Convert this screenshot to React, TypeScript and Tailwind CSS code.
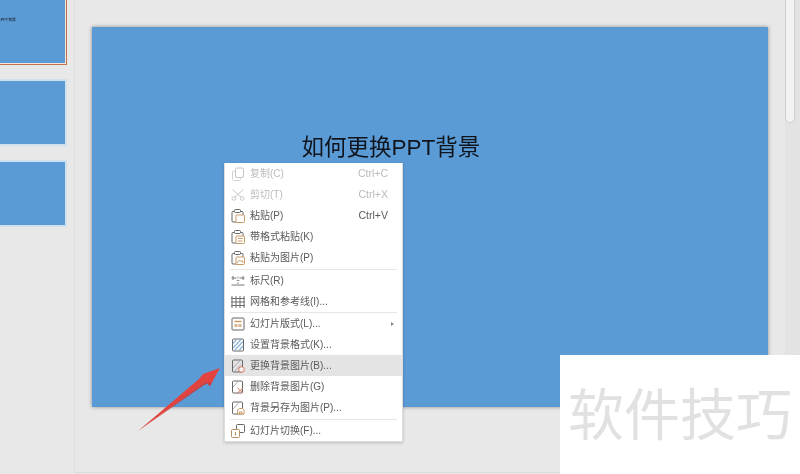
import React from 'react';

const cjk = { fontFamily: '"Liberation Sans", "Noto Sans CJK SC", sans-serif' };

function Svg({ children }: { children: React.ReactNode }) {
  return (
    <svg width="14" height="14" viewBox="0 0 14 14" fill="none" strokeWidth="1" className="shrink-0">
      {children}
    </svg>
  );
}

const CopyIcon = () => (
  <Svg>
    <rect x="4.5" y="1" width="8" height="9.500" rx="1.500" stroke="#c4c4c4" />
    <path d="M4 4H2.500A1 1 0 0 0 1.500 5v7.500a1 1 0 0 0 1 1h6a1 1 0 0 0 1-1v-1" stroke="#d2d2d2" />
  </Svg>
);

const CutIcon = () => (
  <Svg>
    <path d="M12.500 1.500 4 9M1.500 1.500l8.500 7.500" stroke="#c8c8c8" />
    <circle cx="2.800" cy="10.500" r="1.800" stroke="#c8c8c8" />
    <circle cx="11.200" cy="10.500" r="1.800" stroke="#c8c8c8" />
  </Svg>
);

const PasteIcon = ({ extra }: { extra?: React.ReactNode }) => (
  <Svg>
    <path d="M3.500 2.500H2a1 1 0 0 0-1 1v8.500a1 1 0 0 0 1 1h4M9.500 2.500H11a1 1 0 0 1 1 1V6" stroke="#666" />
    <rect x="3.500" y="0.500" width="6" height="3" rx="1" stroke="#666" />
    <rect x="5" y="6" width="8.500" height="7.500" rx="1" stroke="#c99a66" fill="#fff" />
    {extra}
  </Svg>
);

const RulerIcon = () => (
  <Svg>
    <path d="M0.500 4h5M8.500 4h5M2 2v4M12 2v4M0.500 11h13" stroke="#777" />
    <path d="M7 2.500v2M5.500 6.500h3M7 8v2" stroke="#999" />
  </Svg>
);

const GridIcon = () => (
  <Svg>
    <path d="M1 1v12M5 1v12M9 1v12M13 1v12M0 3.500h14M0 7h14M0 10.500h14" stroke="#6e6e6e" />
  </Svg>
);

const LayoutIcon = () => (
  <Svg>
    <rect x="1" y="1" width="12" height="12" rx="1" stroke="#666" />
    <path d="M3.500 4.500h7" stroke="#c99a66" strokeWidth="1.500" />
    <rect x="3.500" y="7" width="3" height="3" fill="#d8b48c" />
    <rect x="7.500" y="7" width="3" height="3" fill="#d8b48c" />
  </Svg>
);

const BgFormatIcon = () => (
  <Svg>
    <rect x="1.500" y="1" width="11" height="12" rx="1" stroke="#666" />
    <path d="M2 10 10 1.500M3.500 12.500l8.500-9M2 5.500 5.500 1.500M8 12.500l4-4.500" stroke="#8fb2d6" strokeWidth="1.200" />
  </Svg>
);

const BgSwapIcon = () => (
  <Svg>
    <rect x="1.500" y="1" width="10" height="12" rx="1" stroke="#666" />
    <path d="M2 9 9 1.500M4 12l6-6.500" stroke="#a9a9a9" />
    <circle cx="10.500" cy="10.500" r="2.800" fill="#f2f2f2" stroke="#d77a5a" />
  </Svg>
);

const BgDeleteIcon = () => (
  <Svg>
    <rect x="1.500" y="1" width="10" height="12" rx="1" stroke="#666" />
    <path d="M2 7 7 1.500" stroke="#a9a9a9" />
    <path d="M6.500 8l5.500 5M12 8l-5.500 5" stroke="#d77a5a" />
  </Svg>
);

const BgSaveIcon = () => (
  <Svg>
    <rect x="1.500" y="1" width="10" height="12" rx="1" stroke="#666" />
    <path d="M2 8 8 1.500" stroke="#a9a9a9" />
    <path d="M6.500 13V9l2-1.500h3l1.500 1.500v4z" fill="#fff" stroke="#c99a66" />
    <path d="M8.500 13v-2h2.500v2" stroke="#c99a66" />
  </Svg>
);

const TransitionIcon = () => (
  <Svg>
    <rect x="5.500" y="0.500" width="8" height="8" rx="1" stroke="#666" />
    <rect x="0.500" y="5.500" width="8" height="8" rx="1" fill="#fff" stroke="#b98f62" />
    <path d="M4.500 8v3.500" stroke="#b98f62" />
  </Svg>
);

type Row = { label: string; icon: React.ReactNode; shortcut?: string; disabled?: boolean; hover?: boolean; more?: boolean };

const groups: { rows: Row[]; sep: string }[] = [
  {
    sep: 'h-[2px] pt-px',
    rows: [
      { label: '复制(C)', icon: <CopyIcon />, shortcut: 'Ctrl+C', disabled: true },
      { label: '剪切(T)', icon: <CutIcon />, shortcut: 'Ctrl+X', disabled: true },
      { label: '粘贴(P)', icon: <PasteIcon />, shortcut: 'Ctrl+V' },
      { label: '带格式粘贴(K)', icon: <PasteIcon extra={<path d="M7 8.500h4.500M7 11h4.500" stroke="#c99a66" />} /> },
      { label: '粘贴为图片(P)', icon: <PasteIcon extra={<path d="M6 12l2.500-3 1.500 1.500 1-1 1.500 2.500" stroke="#c99a66" />} /> },
    ],
  },
  {
    sep: 'h-px',
    rows: [
      { label: '标尺(R)', icon: <RulerIcon /> },
      { label: '网格和参考线(I)...', icon: <GridIcon /> },
    ],
  },
  {
    sep: 'h-[2px] pt-px',
    rows: [
      { label: '幻灯片版式(L)...', icon: <LayoutIcon />, more: true },
      { label: '设置背景格式(K)...', icon: <BgFormatIcon /> },
      { label: '更换背景图片(B)...', icon: <BgSwapIcon />, hover: true },
      { label: '删除背景图片(G)', icon: <BgDeleteIcon /> },
      { label: '背景另存为图片(P)...', icon: <BgSaveIcon /> },
    ],
  },
  {
    sep: 'hidden',
    rows: [{ label: '幻灯片切换(F)...', icon: <TransitionIcon /> }],
  },
];

function MenuRow({ row }: { row: Row }) {
  return (
    <div className={`flex h-[21px] items-center pl-[6px] pr-[14px] text-[10px] ${row.hover ? 'bg-[#e4e4e4]' : ''} ${row.disabled ? 'text-[#bbbbbb]' : 'text-[#5a5a5a]'}`}>
      {row.icon}
      <span className="ml-[5px] flex-1 whitespace-nowrap">{row.label}</span>
      {row.shortcut && <span className="text-[10.500px]">{row.shortcut}</span>}
      {row.more && <span className="-mr-[6px] h-0 w-0 border-y-[2.500px] border-l-[3px] border-y-transparent border-l-[#888888]" />}
    </div>
  );
}

function Thumb({ active, text }: { active?: boolean; text?: boolean }) {
  return (
    <div className={`relative h-[67px] overflow-hidden bg-[#5b9bd5] ${active ? 'border border-[#c2724a] shadow-[inset_0_0_0_1px_#f5e6dc]' : 'border-[2px] border-[#cfe0ef]'}`}>
      {text && <span className="absolute right-[50px] top-[18px] whitespace-nowrap text-[3.900px] leading-[5px] text-[#10141c]">如何更换PPT背景</span>}
    </div>
  );
}

function Arrow() {
  return (
    <svg className="absolute left-[130px] top-[360px]" width="100" height="80" viewBox="130 360 100 80">
      <path d="M138 431 199 379 203 374 220 368 210 386 206 382Z" fill="#e2433f" />
      <path d="M138 431 206 382 210 386 212 382 204 385Z" fill="#c63b3c" />
    </svg>
  );
}

export default function App() {
  return (
    <div className="relative flex h-[474px] w-[800px] overflow-hidden bg-[#e8e8e8] blur-[0.4px]" style={cjk}>
      <aside className="flex h-full w-[75px] shrink-0 flex-col gap-[14px] overflow-hidden border-r border-[#e0e0e0] pr-[7px]">
        <div className="-ml-[10px] -mt-[2px]"><Thumb active text /></div>
        <div className="-ml-[10px]"><Thumb /></div>
        <div className="-ml-[10px]"><Thumb /></div>
      </aside>

      <main className="flex h-[473px] flex-1 border-b border-[#dcdcdc]">
        <div className="flex-1 pl-[17px] pt-[27px]">
          <div className="flex h-[380px] w-[676px] items-start justify-center bg-[#5b9bd5] pr-[78px] pt-[106px] shadow-[0_0_4px_rgba(0,0,0,0.4)]">
            <h1 className="whitespace-nowrap text-[22.500px] leading-[30px] text-[#10141c]">如何更换PPT背景</h1>
          </div>
        </div>
        <div className="w-[15px] bg-[#e3e3e3]">
          <div className="h-[123px] w-[10px] rounded-b-[5px] border border-t-0 border-[#cfcfcf] bg-[#f3f3f3]" />
        </div>
      </main>

      <div className="absolute left-[224px] top-[163px] w-[179px] border border-t-0 border-[#dddddd] bg-white shadow-[0_1px_3px_rgba(0,0,0,0.2)]">
        {groups.map((g, i) => (
          <div key={i}>
            {g.rows.map(r => <MenuRow key={r.label} row={r} />)}
            <div className={g.sep}><div className="mx-[5px] h-px bg-[#e6e6e6]" /></div>
          </div>
        ))}
      </div>

      <Arrow />

      <div className="absolute bottom-0 right-0 flex h-[119px] w-[240px] items-start justify-center bg-white pt-[16px]">
        <span className="whitespace-nowrap text-[56px] leading-[80px] text-[#e1e1e1]" style={{ fontFamily: '"Noto Sans CJK SC", sans-serif' }}>软件技巧</span>
      </div>
    </div>
  );
}
